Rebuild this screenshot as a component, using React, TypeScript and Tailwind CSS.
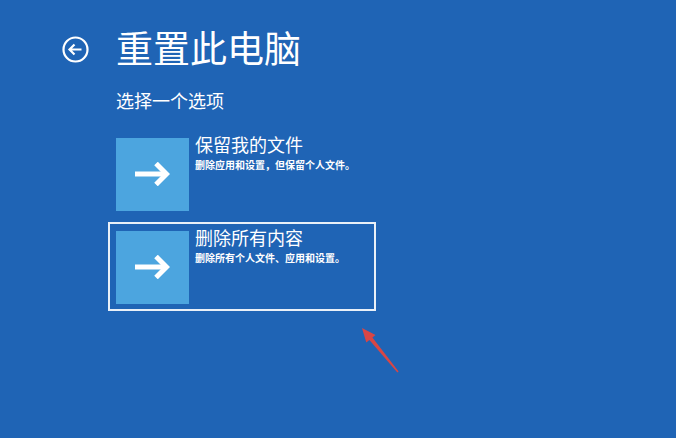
import React from 'react';

const font = { fontFamily: '"Noto Sans CJK SC", "Noto Sans", sans-serif' };

function BackIcon() {
  return (
    <svg width="27" height="27" viewBox="0 0 27 27" fill="none" className="shrink-0">
      <circle cx="13.5" cy="13.5" r="12" stroke="white" strokeWidth="2.2" />
      <path d="M7.5 13.5H19.5M12.5 8.5L7.5 13.5L12.5 18.5" stroke="white" strokeWidth="2.2" />
    </svg>
  );
}

function ArrowTile() {
  return (
    <div className="flex h-[73px] w-[73px] shrink-0 items-center justify-center bg-[#4ca5df]">
      <svg width="35" height="24" viewBox="0 0 35 24" fill="none" className="mt-[-2px]">
        <path d="M0 12H32" stroke="white" strokeWidth="5" />
        <path d="M21 1.5L31.5 12L21 22.5" stroke="white" strokeWidth="5" />
      </svg>
    </div>
  );
}

interface OptionProps {
  title: string;
  desc: string;
  selected?: boolean;
}

function Option({ title, desc, selected = false }: OptionProps) {
  return (
    <div
      className={
        'flex h-[89px] w-[268px] border-2 pl-[6px] pt-[7px] ' +
        (selected ? 'border-white/90' : 'border-transparent')
      }
    >
      <ArrowTile />
      <div className="ml-[6px] mt-[-7px] flex flex-col text-white">
        <span className="block text-[18px] leading-[26px]">{title}</span>
        <span className="block text-[10px] font-semibold leading-[15px]">{desc}</span>
      </div>
    </div>
  );
}

export default function App() {
  return (
    <div className="relative h-[438px] w-[676px] overflow-hidden bg-[#1f64b5] text-white" style={font}>
      <div className="flex flex-col pt-[29px]">
        <div className="flex items-center pl-[62px]">
          <div className="mt-[3px]">
            <BackIcon />
          </div>
          <h1 className="ml-[27px] text-[37px] font-normal leading-[37px]">重置此电脑</h1>
        </div>
        <p className="ml-[116px] mt-[25px] text-[18px] leading-[18px]">选择一个选项</p>
        <div className="ml-[108px] mt-[20px] flex flex-col gap-[4px]">
          <Option title="保留我的文件" desc="删除应用和设置，但保留个人文件。" />
          <Option title="删除所有内容" desc="删除所有个人文件、应用和设置。" selected />
        </div>
      </div>

      {/* red annotation arrow */}
      <svg
        className="pointer-events-none absolute left-[350px] top-[318px]"
        width="60"
        height="62"
        viewBox="350 318 60 62"
      >
        <polygon
          points="362,328 375.5,335 372.4,337.5 398.6,371.6 397.4,372.4 369.4,340.1 366.3,342.6"
          fill="#e8433c"
          opacity="0.92"
        />
      </svg>
    </div>
  );
}
